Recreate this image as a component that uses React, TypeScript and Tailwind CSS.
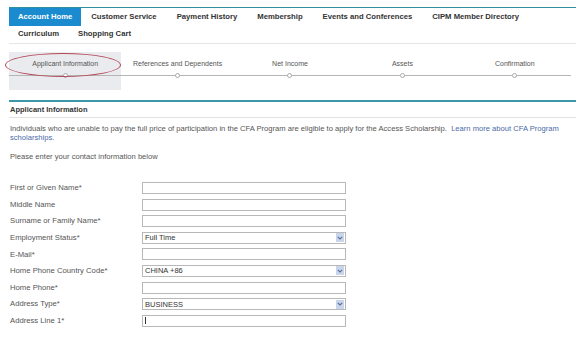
import React from "react";

const navTop = ["Customer Service", "Payment History", "Membership", "Events and Conferences", "CIPM Member Directory"];
const steps = ["Applicant Information", "References and Dependents", "Net Income", "Assets", "Confirmation"];

type Field = { label: string; kind: "text" | "select"; value?: string; cursor?: boolean };

const fields: Field[] = [
  { label: "First or Given Name*", kind: "text" },
  { label: "Middle Name", kind: "text" },
  { label: "Surname or Family Name*", kind: "text" },
  { label: "Employment Status*", kind: "select", value: "Full Time" },
  { label: "E-Mail*", kind: "text" },
  { label: "Home Phone Country Code*", kind: "select", value: "CHINA +86" },
  { label: "Home Phone*", kind: "text" },
  { label: "Address Type*", kind: "select", value: "BUSINESS" },
  { label: "Address Line 1*", kind: "text", cursor: true },
];

const Chevron = () => (
  <div className="w-[8px] h-[9px] bg-[#c9d5ea] flex items-center justify-center">
    <svg width="6" height="4" viewBox="0 0 6 4">
      <path d="M0.8 0.8 L3 3 L5.2 0.8" fill="none" stroke="#5a6f9a" strokeWidth="1.1" />
    </svg>
  </div>
);

export default function App() {
  return (
    <div className="w-[586px] h-[359px] bg-white overflow-hidden font-['Liberation_Sans',Arial,sans-serif] text-[#4a4a4a]">
      <div className="pt-[7px] pl-[9px] pr-[10px]">
        {/* nav */}
        <div className="border-t-[1.5px] border-[#2f8f9c]">
          <div className="flex h-[18px] items-center text-[7.7px] font-bold text-[#333]">
            <div className="h-full px-[9px] flex items-center bg-[#1b8bd0] text-white">Account Home</div>
            {navTop.map((n) => (
              <div key={n} className="px-[10px]">{n}</div>
            ))}
          </div>
          <div className="flex h-[15px] items-center text-[7.7px] font-bold text-[#333]">
            <div className="px-[9px]">Curriculum</div>
            <div className="px-[10px]">Shopping Cart</div>
          </div>
        </div>
        <div className="mt-[2px] border-t border-[#e6e6e6]" />

        {/* steps */}
        <div className="relative mt-[8px] h-[38px]">
          <div className="absolute left-0 top-0 w-[112px] h-[38px] bg-[#e9ebee]" />
          <div className="absolute left-0 right-[5px] top-[23px] border-t border-[#b5b5b5]" />
          <div className="relative grid grid-cols-5 w-[562px] text-[7px] text-[#555]">
            {steps.map((s) => (
              <div key={s} className="flex flex-col items-center">
                <div className="h-[10px] mt-[7px] leading-[10px]">{s}</div>
                <div className="mt-[4px] w-[5px] h-[5px] rounded-full border border-[#aaa] bg-white" />
              </div>
            ))}
          </div>
          <div className="absolute left-[-4px] top-[1px] w-[116px] h-[24px] rounded-[50%] border border-[#b44a5a]" />
        </div>

        {/* section */}
        <div className="mt-[10px] border-t-2 border-[#3d97ab]" />
        <div className="h-[15px] flex items-center pl-[1px] text-[7.5px] font-bold text-[#333]">Applicant Information</div>
        <div className="border-t border-[#e2e2e2]" />
        <p className="mt-[6px] pl-[1px] text-[7.6px] leading-[9px] text-[#555]">
          Individuals who are unable to pay the full price of participation in the CFA Program are eligible to apply for the Access Scholarship.{"\u00a0 "}
          <span className="text-[#4a6aa8]">Learn more about CFA Program</span>{" "}
          <span className="text-[#4a6aa8]">scholarships.</span>
        </p>
        <p className="mt-[10px] pl-[1px] text-[7.6px] leading-[9px] text-[#555]">Please enter your contact information below</p>

        {/* form */}
        <div className="mt-[21px] flex flex-col gap-[4.6px]">
          {fields.map((f) => (
            <div key={f.label} className="flex items-center h-[12px]">
              <div className="w-[133px] pl-[1px] text-[7.7px] text-[#555]">{f.label}</div>
              <div className="w-[204px] h-[12px] border border-[#b8b8b8] bg-white flex items-center pl-[2px] pr-[1px] text-[7.5px] text-[#333]">
                <div className="flex-1 flex items-center">
                  {f.value}
                  {f.cursor && <div className="w-px h-[7px] bg-[#333]" />}
                </div>
                {f.kind === "select" && <Chevron />}
              </div>
            </div>
          ))}
        </div>
      </div>
    </div>
  );
}
